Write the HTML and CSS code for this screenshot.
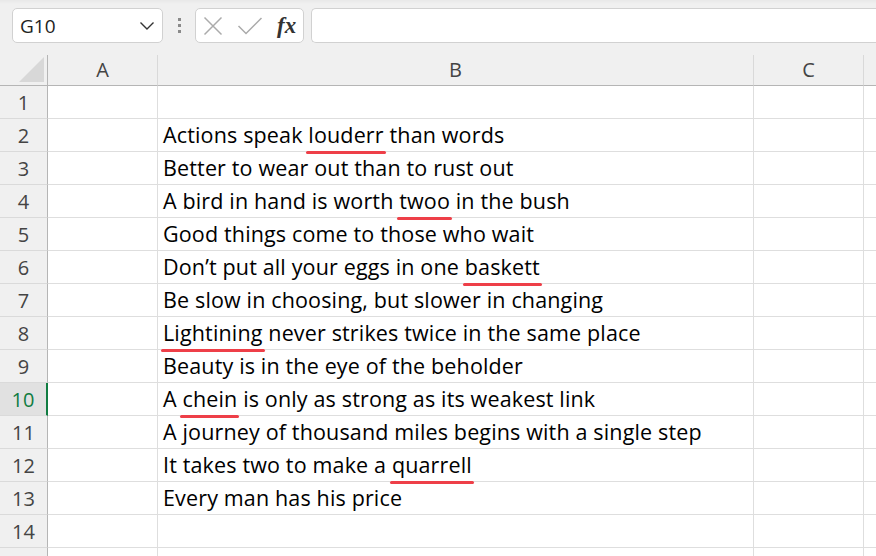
FILE: index.html
```html
<!DOCTYPE html>
<html>
<head>
<meta charset="utf-8">
<link rel="stylesheet" href="styles.css">
</head>
<body>
<div class="topbar">
  <div class="namebox">
    <span class="nb-text">G10</span>
    <svg class="chev" width="16" height="10" viewBox="0 0 16 10"><path d="M1.5 1.5 L8 8 L14.5 1.5" fill="none" stroke="#333" stroke-width="1.4"/></svg>
  </div>
  <div class="dots"><i></i><i></i><i></i></div>
  <div class="fxbox">
    <svg width="20" height="20" viewBox="0 0 20 20"><path d="M1.5 1.5 L18.5 18.5 M18.5 1.5 L1.5 18.5" stroke="#ababab" stroke-width="1.5" fill="none"/></svg>
    <svg width="26" height="20" viewBox="0 0 26 20"><path d="M1.5 10 L9 17.5 L24.5 2" stroke="#ababab" stroke-width="1.5" fill="none"/></svg>
    <span class="fx">fx</span>
  </div>
  <div class="formula"></div>
</div>
<div class="grid">
  <div class="corner"><span class="tri"></span></div>
  <div class="ch">A</div>
  <div class="ch">B</div>
  <div class="ch">C</div>
  <div class="ch last"></div>

  <div class="rh">1</div><div class="c"></div><div class="c"></div><div class="c"></div><div class="c last"></div>
  <div class="rh">2</div><div class="c"></div><div class="c">Actions speak <span class="err">louderr</span> than words</div><div class="c"></div><div class="c last"></div>
  <div class="rh">3</div><div class="c"></div><div class="c">Better to wear out than to rust out</div><div class="c"></div><div class="c last"></div>
  <div class="rh">4</div><div class="c"></div><div class="c">A bird in hand is worth <span class="err">twoo</span> in the bush</div><div class="c"></div><div class="c last"></div>
  <div class="rh">5</div><div class="c"></div><div class="c">Good things come to those who wait</div><div class="c"></div><div class="c last"></div>
  <div class="rh">6</div><div class="c"></div><div class="c">Don’t put all your eggs in one <span class="err">baskett</span></div><div class="c"></div><div class="c last"></div>
  <div class="rh">7</div><div class="c"></div><div class="c">Be slow in choosing, but slower in changing</div><div class="c"></div><div class="c last"></div>
  <div class="rh">8</div><div class="c"></div><div class="c"><span class="err">Lightining</span> never strikes twice in the same place</div><div class="c"></div><div class="c last"></div>
  <div class="rh">9</div><div class="c"></div><div class="c">Beauty is in the eye of the beholder</div><div class="c"></div><div class="c last"></div>
  <div class="rh sel">10</div><div class="c"></div><div class="c">A <span class="err">chein</span> is only as strong as its weakest link</div><div class="c"></div><div class="c last"></div>
  <div class="rh">11</div><div class="c"></div><div class="c">A journey of thousand miles begins with a single step</div><div class="c"></div><div class="c last"></div>
  <div class="rh">12</div><div class="c"></div><div class="c">It takes two to make a <span class="err">quarrell</span></div><div class="c"></div><div class="c last"></div>
  <div class="rh">13</div><div class="c"></div><div class="c">Every man has his price</div><div class="c"></div><div class="c last"></div>
  <div class="rh">14</div><div class="c"></div><div class="c"></div><div class="c"></div><div class="c last"></div>
  <div class="rh"></div><div class="c"></div><div class="c"></div><div class="c"></div><div class="c last"></div>
</div>
</body>
</html>
```
FILE: styles.css
```css
* { box-sizing: border-box; }
html, body { margin: 0; padding: 0; }
body {
  width: 876px;
  height: 556px;
  overflow: hidden;
  background: #f0f0f0;
  font-family: "Open Sans", "Liberation Sans", sans-serif;
}
.topbar {
  height: 55px;
  display: flex;
  align-items: flex-start;
  padding: 8px 0 0 12px;
  background: linear-gradient(#e8e8e8 0, #f0f0f0 4px);
}
.namebox {
  width: 151px;
  height: 35px;
  background: #fff;
  border: 1px solid #d1d1d1;
  border-radius: 5px;
  display: flex;
  align-items: center;
  justify-content: space-between;
  padding: 0 7px 0 7px;
}
.nb-text { font-size: 19px; color: #222; }
.dots {
  width: 32px;
  height: 35px;
  display: flex;
  flex-direction: column;
  align-items: center;
  justify-content: center;
  gap: 3px;
}
.dots i { display: block; width: 3px; height: 3px; background: #8a8a8a; }
.fxbox {
  width: 109px;
  height: 35px;
  background: #fff;
  border: 1px solid #d1d1d1;
  border-radius: 5px;
  display: flex;
  align-items: center;
  padding: 0 6px 0 7px;
  gap: 14px;
}
.fx {
  font-family: "Liberation Serif", serif;
  font-style: italic;
  font-weight: bold;
  font-size: 23px;
  color: #333;
  margin-left: 0;
}
.formula {
  margin-left: 7px;
  flex: 1;
  height: 35px;
  background: #fff;
  border: 1px solid #d1d1d1;
  border-right: none;
  border-radius: 5px 0 0 5px;
}
.grid {
  display: grid;
  grid-template-columns: 48px 110px 596px 110px 1fr;
  grid-template-rows: 31px repeat(15, 33px);
}
.corner, .ch {
  background: #f0f0f0;
  border-bottom: 1px solid #b5b5b5;
  border-right: 1px solid #d9d9d9;
}
.corner { position: relative; border-right-color: #b5b5b5; }
.tri {
  position: absolute;
  right: 3px;
  bottom: 3px;
  width: 0;
  height: 0;
  border-left: 25px solid transparent;
  border-bottom: 25px solid #d8d8d8;
}
.ch {
  display: flex;
  align-items: center;
  justify-content: center;
  font-size: 20px;
  color: #444;
  padding-bottom: 1px;
}
.rh {
  background: #f0f0f0;
  border-right: 1px solid #b5b5b5;
  border-bottom: 1px solid #dadada;
  display: flex;
  align-items: center;
  justify-content: center;
  font-size: 20px;
  color: #444;
}
.rh.sel {
  background: #e1e1e1;
  color: #107c41;
  border-right: 2px solid #107c41;
}
.c {
  background: #fff;
  border-right: 1px solid #dedede;
  border-bottom: 1px solid #dedede;
  font-size: 21.5px;
  letter-spacing: 0.15px;
  line-height: 32px;
  color: #000;
  white-space: nowrap;
  padding: 0 0 0 5px;
  overflow: visible;
}
.c.last, .ch.last { border-right: none; }
.err { position: relative; }
.err::after {
  content: "";
  position: absolute;
  left: -2px;
  right: -2px;
  bottom: -5px;
  height: 3px;
  border-radius: 2px;
  background: #ee3f48;
}
```
